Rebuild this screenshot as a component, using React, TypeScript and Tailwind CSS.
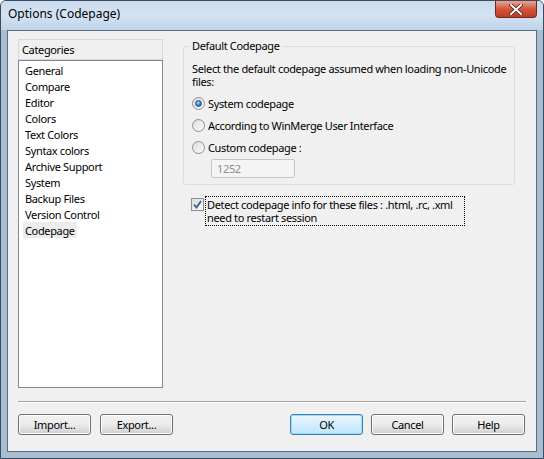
import React from 'react';

const categories = [
  'General',
  'Compare',
  'Editor',
  'Colors',
  'Text Colors',
  'Syntax colors',
  'Archive Support',
  'System',
  'Backup Files',
  'Version Control',
  'Codepage',
];

const Radio: React.FC<{ checked?: boolean; label: string }> = ({ checked, label }) => (
  <div className="flex items-center h-[22px]">
    <span className="w-[13px] h-[13px] rounded-full border border-[#8f8f8f] bg-gradient-to-br from-[#dcdcdc] to-[#fbfbfb] flex items-center justify-center">
      {checked && (
        <span className="w-[7px] h-[7px] rounded-full bg-[radial-gradient(circle_at_40%_35%,#a8d8f8,#1f6fb8_70%)] border border-[#1e4f82]" />
      )}
    </span>
    <span className="ml-[3px]">{label}</span>
  </div>
);

const Button: React.FC<{ label: string; primary?: boolean }> = ({ label, primary }) => (
  <button
    className={
      primary
        ? 'w-[73px] h-[21px] rounded-[3px] border border-[#3c7fb1] bg-gradient-to-b from-[#eaf6fd] to-[#bee6fd] shadow-[inset_0_0_0_1px_#9fdcf8] text-black'
        : 'w-[73px] h-[21px] rounded-[3px] border border-[#707070] bg-gradient-to-b from-[#f2f2f2] via-[#ebebeb] to-[#cfcfcf] shadow-[inset_0_0_0_1px_#fcfcfc] text-black'
    }
  >
    {label}
  </button>
);

const App: React.FC = () => {
  return (
    <div className="w-[544px] h-[459px] flex flex-col bg-[#a9bdd3] border border-[#3b4a5c] rounded-t-[6px] overflow-hidden font-['Noto_Sans',sans-serif] text-[11px] tracking-[-0.35px] text-black leading-none whitespace-nowrap">
      {/* Title bar */}
      <div className="h-[29px] flex items-start justify-between bg-gradient-to-b from-[#c9dbee] via-[#d4e3f3] to-[#bdd2e8] pl-[7px] pr-[6px]">
        <span className="mt-[7px] text-[12px] tracking-normal text-black">Options (Codepage)</span>
        <div className="w-[42px] h-[17px] rounded-b-[4px] border border-t-0 border-[#6e2a20] bg-gradient-to-b from-[#e8a493] via-[#d0553d] to-[#c23a22] flex items-center justify-center">
          <svg width="14" height="11" viewBox="0 0 14 11">
            <path d="M2 1 L12 10 M12 1 L2 10" stroke="#4a1a12" strokeWidth="3.5" strokeLinecap="square" />
            <path d="M2 1 L12 10 M12 1 L2 10" stroke="#ffffff" strokeWidth="2" strokeLinecap="square" />
          </svg>
        </div>
      </div>

      {/* Client area */}
      <div className="flex-1 mx-[6px] mb-[6px] border border-[#5d6d80] bg-[#f0f0f0] flex flex-col pt-[8px] pl-[10px] pr-[10px]">
        <div className="flex">
          {/* Categories list */}
          <div className="w-[145px] flex flex-col">
            <div className="h-[21px] border border-[#d9d9d9] bg-[#f0f0f0] flex items-center pl-[3px]">Categories</div>
            <div className="h-[328px] border border-[#828790] bg-white pt-[1px] pl-[4px]">
              {categories.map((c) => (
                <div key={c} className="h-[16px] flex items-center">
                  <span
                    className={
                      c === 'Codepage'
                        ? 'h-[16px] flex items-center px-[2px] bg-[#ececec]'
                        : 'h-[16px] flex items-center px-[2px]'
                    }
                  >
                    {c}
                  </span>
                </div>
              ))}
            </div>
          </div>

          {/* Right panel */}
          <div className="ml-[20px] flex flex-col w-[332px]">
            <div className="relative mt-[7px] h-[139px] border border-[#d5dfe5] rounded-[3px] pt-[15px] pl-[8px]">
              <span className="absolute -top-[7px] left-[6px] px-[2px] bg-[#f0f0f0]">Default Codepage</span>
              <p className="leading-[13px]">
                Select the default codepage assumed when loading non-Unicode
                <br />
                files:
              </p>
              <div className="mt-[4px]">
                <Radio checked label="System codepage" />
                <Radio label="According to WinMerge User Interface" />
                <Radio label="Custom codepage :" />
              </div>
              <div className="ml-[19px] mt-[1px] w-[84px] h-[19px] border border-[#c6c6c6] rounded-[2px] bg-[#f4f4f4] flex items-center pl-[5px] text-[#8c8c8c]">
                1252
              </div>
            </div>

            <div className="mt-[11px] ml-[8px] flex items-start">
              <span className="mt-[2px] w-[13px] h-[13px] border border-[#8f8f8f] bg-gradient-to-br from-[#dcdcdc] to-[#fafafa] flex items-center justify-center">
                <svg width="9" height="9" viewBox="0 0 9 9">
                  <path d="M1 4.5 L3.5 7.5 L8 1" fill="none" stroke="#3c5a9c" strokeWidth="1.8" />
                </svg>
              </span>
              <span className="ml-[1px] border border-dotted border-black px-[1px] py-px leading-[13px] w-[260px]">
                Detect codepage info for these files : .html, .rc, .xml
                <br />
                need to restart session
              </span>
            </div>
          </div>
        </div>

        {/* Separator */}
        <div className="mt-[13px] h-px bg-[#a0a0a0] border-b border-white box-content" />

        {/* Buttons */}
        <div className="mt-[11px] flex items-center">
          <Button label="Import..." />
          <div className="ml-[9px]">
            <Button label="Export..." />
          </div>
          <div className="ml-auto flex gap-[8px] pr-[1px]">
            <Button label="OK" primary />
            <Button label="Cancel" />
            <Button label="Help" />
          </div>
        </div>
      </div>
    </div>
  );
};

export default App;
